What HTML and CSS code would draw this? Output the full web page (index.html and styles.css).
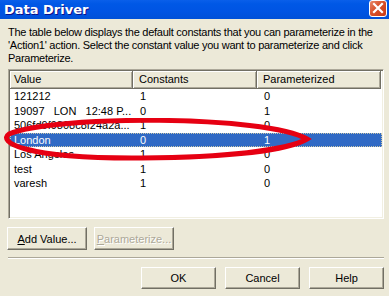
FILE: index.html
```html
<!DOCTYPE html>
<html lang="en">
<head>
    <meta charset="UTF-8">
    <meta name="viewport" content="width=device-width, initial-scale=1.0">
    <title>Data Driver</title>
    <link rel="stylesheet" href="styles.css">
</head>
<body>
    <div class="dialog">
        <div class="titlebar">
            <span class="title">Data Driver</span>
            <span class="close">
                <svg width="18" height="17" viewBox="0 0 18 17">
                    <path d="M5 4 L13 12 M13 4 L5 12" stroke="#fff" stroke-width="2.2" stroke-linecap="square"/>
                </svg>
            </span>
        </div>

        <div class="content">
            <p class="intro">The table below displays the default constants that you can parameterize in the<br>'Action1' action. Select the constant value you want to parameterize and click<br>Parameterize.</p>

            <div class="list">
                <div class="list-head">
                    <div class="head-cell">Value</div>
                    <div class="head-cell">Constants</div>
                    <div class="head-cell">Parameterized</div>
                </div>
                <div class="row"><span>121212</span><span>1</span><span>0</span></div>
                <div class="row"><span class="pre">19097   LON   12:48 P...</span><span>0</span><span>1</span></div>
                <div class="row"><span>506fd9f9808c8f24a2a...</span><span>1</span><span>0</span></div>
                <div class="row selected"><span>London</span><span>0</span><span>1</span></div>
                <div class="row"><span>Los Angeles</span><span>1</span><span>0</span></div>
                <div class="row"><span>test</span><span>1</span><span>0</span></div>
                <div class="row"><span>varesh</span><span>1</span><span>0</span></div>

                <!-- red marker drawn over the list -->
                <svg class="marker" width="320" height="60" viewBox="0 0 320 60">
                    <path d="M305 21 C265 -3, 50 -3, 7 16 C-4 23, 18 41, 140 40 C220 39, 285 33, 305 21 Z"
                          fill="none" stroke="#e60012" stroke-width="5"/>
                </svg>
            </div>

            <div class="list-buttons">
                <button class="btn wide" type="button"><u>A</u>dd Value...</button>
                <button class="btn wide disabled" type="button"><u>P</u>arameterize...</button>
            </div>

            <div class="separator"></div>

            <div class="dialog-buttons">
                <button class="btn" type="button">OK</button>
                <button class="btn" type="button">Cancel</button>
                <button class="btn" type="button">Help</button>
            </div>
        </div>
    </div>
</body>
</html>
```

FILE: styles.css
```css
/* Global Styling */
body {
    margin: 0;
    font-family: "Liberation Sans", Arial, sans-serif;
    font-size: 11px;
    color: #000;
    background-color: #ece9d8;
}

.dialog {
    width: 389px;
    height: 296px;
    overflow: hidden;
    background-color: #ece9d8;
}

/* Title Bar */
.titlebar {
    height: 19px;
    display: flex;
    align-items: center;
    justify-content: space-between;
    padding: 0 2px 0 4px;
    background: linear-gradient(#0a5fea, #0058e6 20%, #0054e3 60%, #0050d8);
}

.title {
    font-family: "DejaVu Sans", sans-serif;
    font-weight: bold;
    font-size: 13px;
    color: #fff;
    text-shadow: 1px 1px #0f1089;
}

.close {
    width: 18px;
    height: 17px;
    margin-top: -2px;
    border: 1px solid #fff;
    border-radius: 3px;
    background: linear-gradient(135deg, #e8886a, #d8512b 45%, #c83a17);
    box-sizing: border-box;
    display: flex;
}

.close svg {
    margin: -1px;
}

/* Content */
.content {
    padding: 7px 5px 0 8px;
}

.intro {
    margin: 0 -5px 0 0;
    line-height: 13px;
    white-space: nowrap;
    letter-spacing: -0.26px;
}

/* List View */
.list {
    position: relative;
    margin-top: 4px;
    width: 376px;
    height: 150px;
    box-sizing: border-box;
    background-color: #fff;
    border: 1px solid;
    border-color: #aca899 #fff #fff #aca899;
    box-shadow: inset 1px 1px #716f64, inset -1px -1px #f1efe2;
    padding: 1px;
}

.list-head,
.row {
    display: grid;
    grid-template-columns: 123px 124px 124px;
}

.head-cell {
    height: 18px;
    line-height: 17px;
    padding-left: 6px;
    box-sizing: border-box;
    background-color: #ece9d8;
    border-right: 1px solid #716f64;
    border-bottom: 1px solid #716f64;
    box-shadow: inset 1px 1px #fff, inset -1px -1px #aca899;
}

.head-cell:first-child {
    padding-left: 4px;
}

.row {
    height: 14.5px;
    line-height: 14px;
}

.row span {
    padding-left: 7px;
    white-space: nowrap;
    overflow: hidden;
}

.row span:first-child {
    padding-left: 4px;
}

.row .pre {
    white-space: pre;
}

.row.selected {
    background-color: #316ac5;
    color: #fff;
    outline: 1px dotted #c9c6a8;
    outline-offset: -1px;
}

.marker {
    position: absolute;
    left: -7px;
    top: 48px;
}

/* Buttons */
.list-buttons {
    display: flex;
    gap: 7px;
    margin-top: 8px;
    margin-left: -1px;
}

.btn {
    width: 75px;
    height: 22px;
    padding: 0;
    font-family: "Liberation Sans", Arial, sans-serif;
    font-size: 11px;
    color: #000;
    background-color: #ece9d8;
    border: 1px solid;
    border-color: #fff #716f64 #716f64 #fff;
    box-shadow: inset -1px -1px #aca899;
    border-radius: 0;
}

.btn.wide {
    width: 80px;
    height: 23px;
}

.btn.disabled {
    color: #aca899;
    text-shadow: 1px 1px #fff;
}

.separator {
    margin-top: 7px;
    width: 376px;
    height: 1px;
    background-color: #aca899;
    border-bottom: 1px solid #fff;
}

.dialog-buttons {
    display: flex;
    justify-content: flex-end;
    gap: 9px;
    margin-top: 8px;
}
```
